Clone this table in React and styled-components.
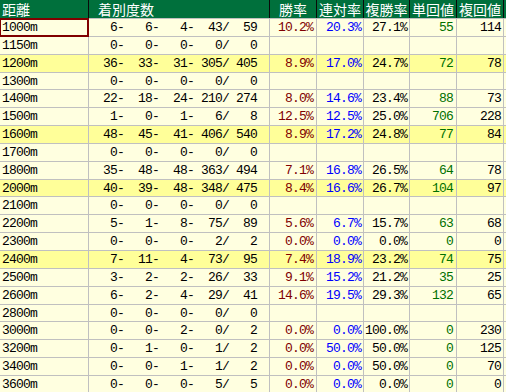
import React from 'react';
import styled, { createGlobalStyle } from 'styled-components';

const Global = createGlobalStyle`
  html, body { margin: 0; padding: 0; background: #fff; overflow: hidden; }
`;

const COLS = '88px 180px 46px 46px 45px 46px 46px 1fr';

const Wrap = styled.div`
  width: 506px;
`;

const HeadRow = styled.div`
  display: grid;
  grid-template-columns: ${COLS};
  column-gap: 1px;
  background: #0a0a0a;
  height: 18px;
`;

const HeadCell = styled.div`
  background: #00703c;
  color: #fff;
  font-family: "Noto Sans CJK JP", sans-serif;
  font-size: 14px;
  line-height: 18px;
  height: 18px;
  text-align: ${p => p.$align || 'center'};
  padding-left: ${p => p.$pl || 0}px;
  white-space: nowrap;
`;

const Body = styled.div`
  display: grid;
  grid-template-columns: ${COLS};
  grid-auto-rows: 16.85px;
  gap: 1px;
  padding-top: 1px;
  background: #c0c0c0;
`;

const Cell = styled.div`
  background: ${p => (p.$hl ? '#ffff99' : '#ffffe0')};
  color: ${p => p.$color || '#000'};
  font-family: "Liberation Mono", monospace;
  font-size: 13px;
  letter-spacing: -0.8px;
  line-height: 18px;
  text-align: ${p => p.$align || 'right'};
  padding: 0 ${p => (p.$pr ?? 2)}px 0 ${p => (p.$pl ?? 0)}px;
  white-space: pre;
`;

const DistCell = styled(Cell)`
  text-align: left;
  padding-left: 2px;
  position: relative;
  ${p => p.$selected && 'box-shadow: 0 0 0 1px #800000, inset 0 0 0 1px #800000; z-index: 1;'}
`;

const rows = [
  ['1000m', [6, 6, 4, 43, 59], '10.2%', '20.3%', '27.1%', '55', '114'],
  ['1150m', [0, 0, 0, 0, 0]],
  ['1200m', [36, 33, 31, 305, 405], '8.9%', '17.0%', '24.7%', '72', '78', true],
  ['1300m', [0, 0, 0, 0, 0]],
  ['1400m', [22, 18, 24, 210, 274], '8.0%', '14.6%', '23.4%', '88', '73'],
  ['1500m', [1, 0, 1, 6, 8], '12.5%', '12.5%', '25.0%', '706', '228'],
  ['1600m', [48, 45, 41, 406, 540], '8.9%', '17.2%', '24.8%', '77', '84', true],
  ['1700m', [0, 0, 0, 0, 0]],
  ['1800m', [35, 48, 48, 363, 494], '7.1%', '16.8%', '26.5%', '64', '78'],
  ['2000m', [40, 39, 48, 348, 475], '8.4%', '16.6%', '26.7%', '104', '97', true],
  ['2100m', [0, 0, 0, 0, 0]],
  ['2200m', [5, 1, 8, 75, 89], '5.6%', '6.7%', '15.7%', '63', '68'],
  ['2300m', [0, 0, 0, 2, 2], '0.0%', '0.0%', '0.0%', '0', '0'],
  ['2400m', [7, 11, 4, 73, 95], '7.4%', '18.9%', '23.2%', '74', '75', true],
  ['2500m', [3, 2, 2, 26, 33], '9.1%', '15.2%', '21.2%', '35', '25'],
  ['2600m', [6, 2, 4, 29, 41], '14.6%', '19.5%', '29.3%', '132', '65'],
  ['2800m', [0, 0, 0, 0, 0]],
  ['3000m', [0, 0, 2, 0, 2], '0.0%', '0.0%', '100.0%', '0', '230'],
  ['3200m', [0, 1, 0, 1, 2], '0.0%', '50.0%', '50.0%', '0', '125'],
  ['3400m', [0, 0, 1, 1, 2], '0.0%', '0.0%', '50.0%', '0', '70'],
  ['3600m', [0, 0, 0, 5, 5], '0.0%', '0.0%', '0.0%', '0', '0'],
];

const pad = n => String(n).padStart(4, ' ');
const record = r => `${pad(r[0])}-${pad(r[1])}-${pad(r[2])}-${pad(r[3])}/${pad(r[4])}`;

export default function App() {
  return (
    <Wrap>
      <Global />
      <HeadRow>
        <HeadCell $align="left" $pl={2}>距離</HeadCell>
        <HeadCell $align="left" $pl={9}>着別度数</HeadCell>
        <HeadCell>勝率</HeadCell>
        <HeadCell>連対率</HeadCell>
        <HeadCell>複勝率</HeadCell>
        <HeadCell>単回値</HeadCell>
        <HeadCell>複回値</HeadCell>
        <HeadCell />
      </HeadRow>
      <Body>
        {rows.map((r, i) => {
          const hl = !!r[7];
          return (
            <React.Fragment key={r[0]}>
              <DistCell $hl={hl} $selected={i === 0}>{r[0]}</DistCell>
              <Cell $hl={hl} $align="left" $pl={0}>{record(r[1])}</Cell>
              <Cell $hl={hl} $color="#800000" $pr={3}>{r[2] || ''}</Cell>
              <Cell $hl={hl} $color="#0000ff">{r[3] || ''}</Cell>
              <Cell $hl={hl}>{r[4] || ''}</Cell>
              <Cell $hl={hl} $color="#007000" $pr={3}>{r[5] || ''}</Cell>
              <Cell $hl={hl}>{r[6] || ''}</Cell>
              <Cell $hl={hl} />
            </React.Fragment>
          );
        })}
      </Body>
    </Wrap>
  );
}
